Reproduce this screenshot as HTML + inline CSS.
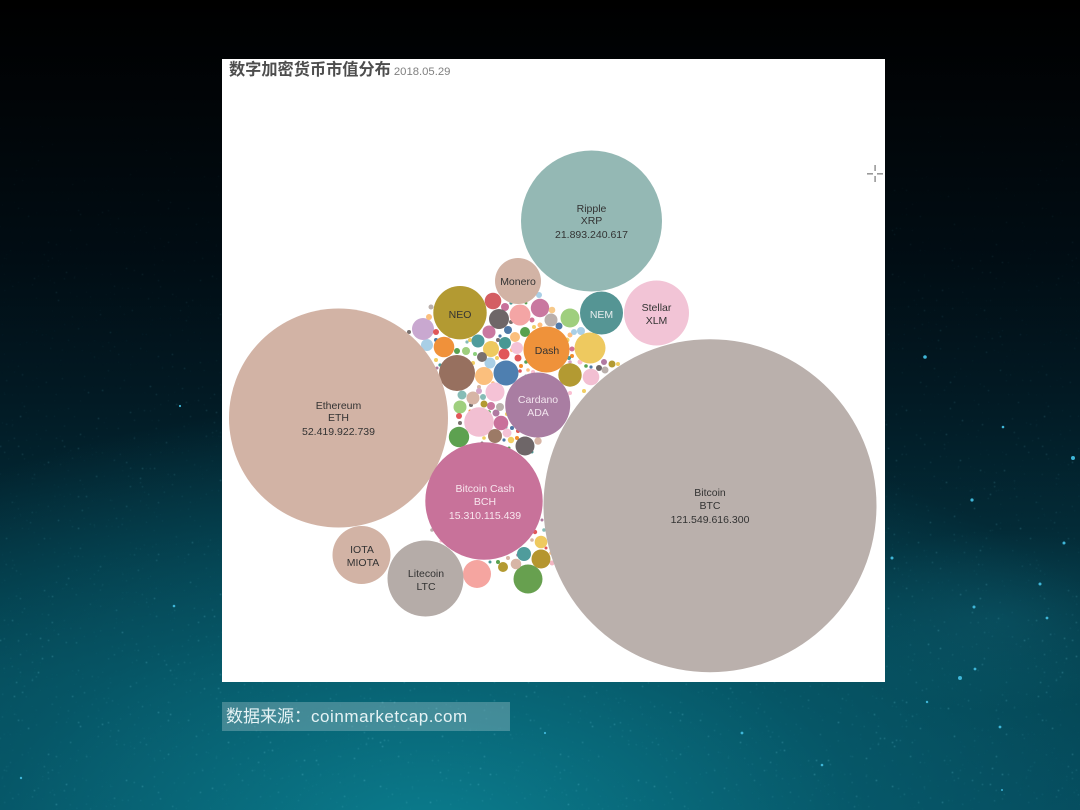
<!DOCTYPE html>
<html lang="zh"><head><meta charset="utf-8"><title>数字加密货币市值分布</title>
<style>
html,body{margin:0;padding:0;background:#000}
#s{position:relative;width:1080px;height:810px;overflow:hidden;font-family:"Liberation Sans","Noto Sans CJK SC",sans-serif;
background:
radial-gradient(ellipse 180px 90px at 1000px 620px,rgba(20,110,130,.28),transparent 100%),
radial-gradient(ellipse 800px 440px at 430px 840px,rgba(11,125,142,1),rgba(7,95,112,.65) 55%,rgba(4,60,75,0) 100%),
linear-gradient(180deg,#000 0,#010508 110px,#010d14 260px,#021a24 400px,#032b37 530px,#044250 680px,#05485a 810px)}
svg{position:absolute;left:0;top:0}
#p{position:absolute;left:222px;top:59px;width:663px;height:623px;background:#fff}
#t{position:absolute;left:229px;top:60px;height:20px;line-height:20px;font-size:16.2px;color:#4d4d4d;font-weight:700;white-space:nowrap;filter:blur(.35px)}
#t span{font-size:11.3px;font-weight:400;color:#808080;margin-left:3px}
#b{position:absolute;left:222px;top:702px;width:288px;height:29px;background:rgba(255,255,255,.24)}
#f{position:absolute;left:226px;top:702px;height:29px;line-height:30px;font-size:17px;color:#e6f3f5;white-space:nowrap;filter:blur(.25px)}
#f span{letter-spacing:.55px}
</style></head><body><div id="s">
<svg width="1080" height="810" viewBox="0 0 1080 810" xmlns="http://www.w3.org/2000/svg">
<defs>
<filter id="st" x="0" y="0" width="100%" height="100%"><feTurbulence type="fractalNoise" baseFrequency=".5" numOctaves="1" seed="7"/><feColorMatrix values="0 0 0 0 .2  0 0 0 0 .72  0 0 0 0 .85  12 0 0 0 -8.6"/><feGaussianBlur stdDeviation=".5"/></filter>
<linearGradient id="g" x1="0" y1="0" x2="0" y2="1"><stop offset=".1" stop-color="#000"/><stop offset=".45" stop-color="#444"/><stop offset=".8" stop-color="#888"/></linearGradient>
<mask id="m"><rect width="1080" height="810" fill="url(#g)"/></mask>
</defs>
<g mask="url(#m)"><rect width="1080" height="810" filter="url(#st)"/></g>
<g fill="#3fb6d8">
<circle cx="972" cy="500" r="1.6"/><circle cx="960" cy="678" r="2"/><circle cx="974" cy="607" r="1.5"/><circle cx="1073" cy="458" r="2"/><circle cx="1064" cy="543" r="1.5"/><circle cx="1040" cy="584" r="1.5"/><circle cx="975" cy="669" r="1.4"/><circle cx="1047" cy="618" r="1.4"/><circle cx="1000" cy="727" r="1.4"/><circle cx="925" cy="357" r="1.8"/><circle cx="1003" cy="427" r="1.3"/><circle cx="892" cy="558" r="1.5"/><circle cx="180" cy="406" r="1.1"/><circle cx="21" cy="778" r="1.2"/><circle cx="174" cy="606" r="1.3"/><circle cx="545" cy="733" r="1.1"/><circle cx="742" cy="733" r="1.4"/><circle cx="822" cy="765" r="1.3"/><circle cx="1002" cy="790" r="1"/><circle cx="927" cy="702" r="1.2"/>
</g>
</svg>
<div id="p"></div>
<svg width="1080" height="810" viewBox="0 0 1080 810" xmlns="http://www.w3.org/2000/svg">
<rect x="867" y="173" width="6" height="1.6" fill="#999"/><rect x="877" y="173" width="6" height="1.6" fill="#999"/><rect x="874.300" y="165" width="1.6" height="6" fill="#999"/><rect x="874.300" y="176" width="1.6" height="6" fill="#999"/>
<g style="filter:blur(.3px)">
<!-- tiny dots -->
<g>
<circle cx="450" cy="336" r="2" fill="#d4a6c8"/><circle cx="436" cy="340" r="2" fill="#4e79a7"/><circle cx="470" cy="340" r="2" fill="#f1ce63"/><circle cx="467" cy="342" r="1.6" fill="#86bcb6"/>
<circle cx="475" cy="354" r="2" fill="#8cd17d"/><circle cx="473" cy="363" r="2" fill="#f1ce63"/><circle cx="436" cy="360" r="2" fill="#f1ce63"/><circle cx="440" cy="365" r="1.6" fill="#499894"/><circle cx="437" cy="368" r="1.5" fill="#b07aa1"/>
<circle cx="498" cy="340" r="2" fill="#79706e"/><circle cx="495" cy="344" r="1.8" fill="#e15759"/><circle cx="500" cy="336" r="1.6" fill="#4e79a7"/><circle cx="512" cy="350" r="2" fill="#ffbe7d"/><circle cx="497" cy="358" r="2" fill="#f1ce63"/>
<circle cx="521" cy="366" r="2" fill="#f28e2b"/><circle cx="526" cy="362" r="1.8" fill="#59a14f"/><circle cx="520" cy="371" r="1.8" fill="#e15759"/><circle cx="528" cy="370" r="1.8" fill="#ffbe7d"/><circle cx="526" cy="376" r="1.6" fill="#86bcb6"/><circle cx="533" cy="372" r="2" fill="#fabfd2"/>
<circle cx="511" cy="322" r="2" fill="#79706e"/><circle cx="511" cy="303" r="1.6" fill="#499894"/><circle cx="526" cy="303" r="1.4" fill="#59a14f"/><circle cx="532" cy="320" r="2.500" fill="#d37295"/><circle cx="540" cy="325" r="2.500" fill="#ffbe7d"/><circle cx="534" cy="327" r="2" fill="#f1ce63"/>
<circle cx="570" cy="335" r="2.500" fill="#ffbe7d"/><circle cx="567" cy="340" r="2.500" fill="#f1ce63"/><circle cx="572" cy="349" r="2.500" fill="#d37295"/><circle cx="572" cy="356" r="2" fill="#f28e2b"/><circle cx="569" cy="358" r="2" fill="#499894"/><circle cx="570" cy="362" r="1.800" fill="#d4a6c8"/>
<circle cx="580" cy="362" r="2.500" fill="#fabfd2"/><circle cx="586" cy="366" r="1.800" fill="#59a14f"/><circle cx="591" cy="367" r="1.600" fill="#4e79a7"/><circle cx="584" cy="391" r="2" fill="#f1ce63"/><circle cx="570" cy="393" r="2" fill="#fabfd2"/>
<circle cx="470" cy="381" r="2" fill="#b07aa1"/><circle cx="479" cy="387" r="2" fill="#d7b5a6"/><circle cx="493" cy="383" r="1.800" fill="#ffbe7d"/><circle cx="521" cy="386" r="2" fill="#bab0ac"/><circle cx="466" cy="386" r="1.600" fill="#86bcb6"/>
<circle cx="489" cy="412" r="1.800" fill="#59a14f"/><circle cx="507" cy="414" r="2" fill="#f1ce63"/><circle cx="471" cy="405" r="2" fill="#79706e"/><circle cx="470" cy="411" r="1.500" fill="#f28e2b"/>
<circle cx="512" cy="428" r="2" fill="#4e79a7"/><circle cx="518" cy="431" r="2" fill="#e15759"/><circle cx="506" cy="427" r="1.600" fill="#86bcb6"/><circle cx="504" cy="440" r="1.600" fill="#4e79a7"/><circle cx="517" cy="438" r="2" fill="#f28e2b"/><circle cx="484" cy="438" r="1.800" fill="#f1ce63"/><circle cx="482" cy="443" r="1.500" fill="#79706e"/><circle cx="509" cy="448" r="1.500" fill="#59a14f"/><circle cx="532" cy="452" r="1.500" fill="#499894"/>
<circle cx="436" cy="525" r="2" fill="#d4a6c8"/><circle cx="432" cy="530" r="1.800" fill="#bab0ac"/><circle cx="440" cy="536" r="1.600" fill="#d7b5a6"/><circle cx="441" cy="541" r="1.500" fill="#fabfd2"/>
<circle cx="490" cy="562" r="1.500" fill="#499894"/><circle cx="498" cy="562" r="2" fill="#59a14f"/><circle cx="508" cy="558" r="2" fill="#d7b5a6"/><circle cx="518" cy="555" r="1.800" fill="#b07aa1"/><circle cx="535" cy="532" r="2.200" fill="#e15759"/><circle cx="532" cy="540" r="1.800" fill="#d7b5a6"/><circle cx="544" cy="530" r="1.800" fill="#86bcb6"/><circle cx="542" cy="520" r="1.500" fill="#b07aa1"/><circle cx="552" cy="563" r="2.500" fill="#f4b6c2"/><circle cx="546" cy="548" r="1.500" fill="#e15759"/><circle cx="551" cy="553" r="1.800" fill="#ffbe7d"/>
</g>
<!-- medium -->
<circle cx="493" cy="301" r="8.300" fill="#d45e63"/><circle cx="505" cy="307" r="4" fill="#c8709a"/><circle cx="499" cy="319" r="10" fill="#6e6668"/><circle cx="520" cy="315" r="10.500" fill="#f4a5a5"/><circle cx="540" cy="308" r="9.200" fill="#c978a0"/><circle cx="539" cy="295" r="3" fill="#a9cfe6"/><circle cx="552" cy="310" r="3.300" fill="#f7c98a"/><circle cx="551" cy="320" r="6.500" fill="#bab0ac"/><circle cx="559" cy="326" r="3.500" fill="#4e79a7"/><circle cx="570" cy="318" r="9.500" fill="#9fcf7e"/>
<circle cx="581" cy="331" r="4" fill="#a9cfe6"/><circle cx="574" cy="332" r="3" fill="#a9cfe6"/><circle cx="590" cy="348" r="15.500" fill="#eec95f"/><circle cx="570" cy="375" r="11.700" fill="#b39a32"/><circle cx="591" cy="377" r="8.300" fill="#f2bfd2"/><circle cx="604" cy="362" r="3" fill="#b07aa1"/><circle cx="599" cy="368" r="3" fill="#6e6668"/><circle cx="605" cy="370" r="3.500" fill="#bab0ac"/><circle cx="612" cy="364" r="3.500" fill="#b39a32"/><circle cx="618" cy="364" r="2" fill="#f1ce63"/>
<circle cx="506" cy="373" r="12.500" fill="#4e7fb0"/><circle cx="457" cy="373" r="18" fill="#97705f"/><circle cx="484" cy="376" r="9" fill="#fbbf7d"/><circle cx="490" cy="363" r="5.500" fill="#a9cfe6"/><circle cx="518" cy="358" r="3.500" fill="#e15759"/><circle cx="517" cy="348" r="6" fill="#f5c2d6"/><circle cx="504" cy="354" r="5.500" fill="#e15759"/><circle cx="505" cy="343" r="6" fill="#499894"/><circle cx="515" cy="337" r="5" fill="#fbbf7d"/><circle cx="525" cy="332" r="5" fill="#59a14f"/><circle cx="508" cy="330" r="4" fill="#4e79a7"/><circle cx="489" cy="332" r="6.500" fill="#c978a0"/><circle cx="478" cy="341" r="6.500" fill="#4f9c9c"/><circle cx="491" cy="349" r="8" fill="#eec95f"/><circle cx="482" cy="357" r="5" fill="#79706e"/><circle cx="457" cy="351" r="3" fill="#59a14f"/><circle cx="466" cy="351" r="4" fill="#9fcf7e"/>
<circle cx="444" cy="347" r="10.300" fill="#f0913a"/><circle cx="427" cy="345" r="6" fill="#a9cfe6"/><circle cx="423" cy="329" r="11" fill="#c9a8d0"/><circle cx="436" cy="332" r="3" fill="#e15759"/><circle cx="409" cy="332" r="2" fill="#79706e"/><circle cx="431" cy="307" r="2.500" fill="#bab0ac"/><circle cx="429" cy="317" r="3" fill="#fbbf7d"/>
<circle cx="495" cy="392" r="9.500" fill="#f5c2d6"/><circle cx="473" cy="398" r="6.500" fill="#d7b5a6"/><circle cx="462" cy="395" r="4.500" fill="#86bcb6"/><circle cx="460" cy="407" r="6.500" fill="#9fcf7e"/><circle cx="459" cy="416" r="3" fill="#e15759"/><circle cx="460" cy="423" r="2" fill="#79706e"/><circle cx="479" cy="422" r="14.800" fill="#f2bfd2"/><circle cx="459" cy="437" r="10.200" fill="#5da150"/><circle cx="495" cy="436" r="7" fill="#9c7a66"/><circle cx="501" cy="423" r="7.300" fill="#c9709a"/><circle cx="496" cy="413" r="3.500" fill="#b07aa1"/><circle cx="491" cy="406" r="4" fill="#c978a0"/><circle cx="500" cy="407" r="4" fill="#bab0ac"/><circle cx="484" cy="404" r="3.500" fill="#b39a32"/><circle cx="483" cy="397" r="3" fill="#86bcb6"/><circle cx="479" cy="391" r="3" fill="#d4a6c8"/>
<circle cx="525" cy="446" r="9.500" fill="#6e6668"/><circle cx="538" cy="441" r="3.700" fill="#d7b5a6"/><circle cx="511" cy="440" r="3.200" fill="#f1ce63"/><circle cx="507" cy="433" r="4.500" fill="#f5c2d6"/>
<circle cx="477" cy="574" r="14" fill="#f5a5a0"/><circle cx="528" cy="579" r="14.500" fill="#67a04f"/><circle cx="503" cy="567" r="5" fill="#b39a32"/><circle cx="516" cy="564" r="5.300" fill="#d7b5a6"/><circle cx="541" cy="559" r="9.500" fill="#b5962f"/><circle cx="524" cy="554" r="7" fill="#4f9c9c"/><circle cx="541" cy="542" r="6.300" fill="#eec95f"/>
<!-- large -->
<circle cx="591.500" cy="221" r="70.500" fill="#94b8b4"/><circle cx="656.500" cy="313" r="32.500" fill="#f2c4d6"/><circle cx="518" cy="281" r="23" fill="#d2b3a5"/><circle cx="460" cy="312.700" r="26.700" fill="#b39a32"/><circle cx="601.500" cy="313" r="21.500" fill="#559594"/><circle cx="546.500" cy="349.500" r="23" fill="#ef923a"/><circle cx="537.700" cy="405" r="32.500" fill="#a97da2"/>
<circle cx="338.500" cy="418" r="109.500" fill="#d2b3a5"/><circle cx="710" cy="505.700" r="166.500" fill="#bab0ac"/><circle cx="484" cy="501" r="58.700" fill="#c8729a"/><circle cx="361.500" cy="555" r="29" fill="#d2b3a5"/><circle cx="425.500" cy="578.500" r="38" fill="#b5aca8"/>
<g font-family="'Liberation Sans',sans-serif" font-size="10.500" text-anchor="middle" fill="#333">
<text x="591.500" y="212">Ripple</text><text x="591.500" y="224">XRP</text><text x="591.500" y="238">21.893.240.617</text>
<text x="656.500" y="311">Stellar</text><text x="656.500" y="324">XLM</text>
<text x="518" y="285">Monero</text><text x="460" y="318">NEO</text><text x="601.500" y="318" fill="#e8eeee">NEM</text><text x="547" y="354">Dash</text>
<text x="538" y="403" fill="#f2e4ee">Cardano</text><text x="538" y="416" fill="#f2e4ee">ADA</text>
<text x="338.500" y="409">Ethereum</text><text x="338.500" y="421">ETH</text><text x="338.500" y="435">52.419.922.739</text>
<text x="710" y="496">Bitcoin</text><text x="710" y="509">BTC</text><text x="710" y="523">121.549.616.300</text>
<text x="485" y="492" fill="#f8e6ee">Bitcoin Cash</text><text x="485" y="505" fill="#f8e6ee">BCH</text><text x="485" y="519" fill="#f8e6ee">15.310.115.439</text>
<text x="362" y="553">IOTA</text><text x="363" y="566">MIOTA</text>
<text x="426" y="577">Litecoin</text><text x="426" y="590">LTC</text>
</g>
</g>
</svg>
<div id="t">数字加密货币市值分布<span>2018.05.29</span></div>
<div id="b"></div>
<div id="f">数据来源：<span>coinmarketcap.com</span></div>
</div></body></html>
